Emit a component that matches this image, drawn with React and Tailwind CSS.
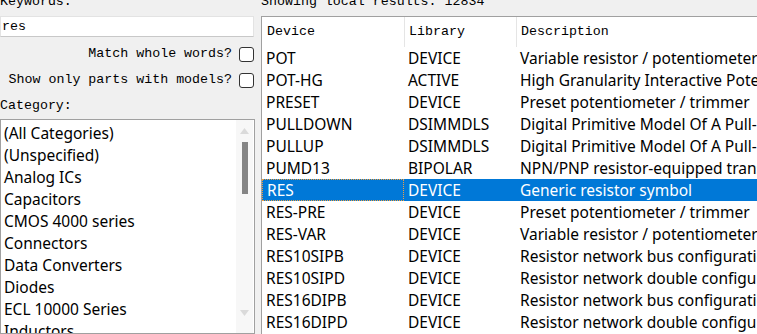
import React from "react";

const categories = [
  "(All Categories)",
  "(Unspecified)",
  "Analog ICs",
  "Capacitors",
  "CMOS 4000 series",
  "Connectors",
  "Data Converters",
  "Diodes",
  "ECL 10000 Series",
  "Inductors",
];

const results = [
  ["POT", "DEVICE", "Variable resistor / potentiometer"],
  ["POT-HG", "ACTIVE", "High Granularity Interactive Potentiometer"],
  ["PRESET", "DEVICE", "Preset potentiometer / trimmer"],
  ["PULLDOWN", "DSIMMDLS", "Digital Primitive Model Of A Pull-down Resistor"],
  ["PULLUP", "DSIMMDLS", "Digital Primitive Model Of A Pull-up Resistor"],
  ["PUMD13", "BIPOLAR", "NPN/PNP resistor-equipped transistors"],
  ["RES", "DEVICE", "Generic resistor symbol"],
  ["RES-PRE", "DEVICE", "Preset potentiometer / trimmer"],
  ["RES-VAR", "DEVICE", "Variable resistor / potentiometer"],
  ["RES10SIPB", "DEVICE", "Resistor network bus configuration"],
  ["RES10SIPD", "DEVICE", "Resistor network double configuration"],
  ["RES16DIPB", "DEVICE", "Resistor network bus configuration"],
  ["RES16DIPD", "DEVICE", "Resistor network double configuration"],
];

const mono = "font-['Liberation_Mono','DejaVu_Sans_Mono',monospace] text-[13.3px]";
const sans = "font-['Noto_Sans','Open_Sans',sans-serif] text-[15.5px]";

const Checkbox = () => (
  <div className="w-[15px] h-[15px] border border-[#333] rounded-[3px] bg-white shrink-0" />
);

const App = () => {
  return (
    <div className="w-[757px] h-[334px] bg-[#f0f0f0] overflow-hidden flex gap-[6px] text-black">
      {/* left: search options */}
      <div className="w-[255px] shrink-0 flex flex-col">
        <div className={`${mono} h-[16px] leading-[16px] -mt-[6px]`}>Keywords:</div>
        <div className={`${mono} mt-[6px] h-[21px] w-[254px] bg-white border border-[#e3e3e3] border-b-[#c8c8c8] leading-[19px] pl-[1px]`}>
          res
        </div>
        <div className="mt-[8px] h-[18px] flex items-center justify-end gap-[7px] pr-[1px]">
          <span className={`${mono} leading-[18px]`}>Match whole words?</span>
          <Checkbox />
        </div>
        <div className="mt-[8px] h-[18px] flex items-center justify-end gap-[7px] pr-[1px]">
          <span className={`${mono} leading-[18px]`}>Show only parts with models?</span>
          <Checkbox />
        </div>
        <div className={`${mono} mt-[9px] h-[16px] leading-[16px]`}>Category:</div>
        <div className="mt-[5px] w-[255px] h-[240px] bg-white border border-[#a0a0a0] flex overflow-hidden">
          <div className="flex-1 pt-[2px]">
            {categories.map((c) => (
              <div key={c} className={`${sans} h-[22px] leading-[22px] pl-[3px] whitespace-nowrap`}>
                {c}
              </div>
            ))}
          </div>
          <div className="w-[17px] mr-[1px] bg-[#f7f7f7] flex flex-col items-center pt-[8px]">
            <svg width="9" height="6" viewBox="0 0 9 6">
              <path d="M0 6 L4.5 0 L9 6 Z" fill="#dadada" />
            </svg>
            <div className="mt-[8px] w-[6px] h-[52px] bg-[#858585]" />
            <div className="flex-1" />
            <svg width="9" height="6" viewBox="0 0 9 6" className="mb-[17px]">
              <path d="M0 0 L4.5 6 L9 0 Z" fill="#dadada" />
            </svg>
          </div>
        </div>
      </div>

      {/* right: results */}
      <div className="flex-1 flex flex-col min-w-0">
        <div className={`${mono} h-[16px] leading-[16px] -mt-[6px] whitespace-nowrap`}>
          Showing local results: 12834
        </div>
        <div className="mt-[6px] w-[600px] flex-1 bg-white border-l border-t border-[#a0a0a0] flex flex-col">
          <div className={`${mono} h-[30px] flex items-center`}>
            <div className="w-[142px] pl-[5px]">Device</div>
            <div className="w-[1px] h-[30px] bg-[#e5e5e5]" />
            <div className="w-[111px] pl-[4px]">Library</div>
            <div className="w-[1px] h-[30px] bg-[#e5e5e5]" />
            <div className="pl-[4px]">Description</div>
          </div>
          {results.map(([dev, lib, desc]) => {
            const sel = dev === "RES";
            return (
              <div
                key={dev}
                className={`${sans} h-[22px] leading-[22px] flex whitespace-nowrap ${sel ? "bg-[#0078d7] text-white" : ""}`}
              >
                <div className={`w-[142px] pl-[4px] ${sel ? "border border-dotted border-[#f0a040] leading-[20px]" : ""}`}>
                  {dev}
                </div>
                <div className="w-[112px] pl-[4px]">{lib}</div>
                <div className="pl-[4px]">{desc}</div>
              </div>
            );
          })}
        </div>
      </div>
    </div>
  );
};

export default App;
